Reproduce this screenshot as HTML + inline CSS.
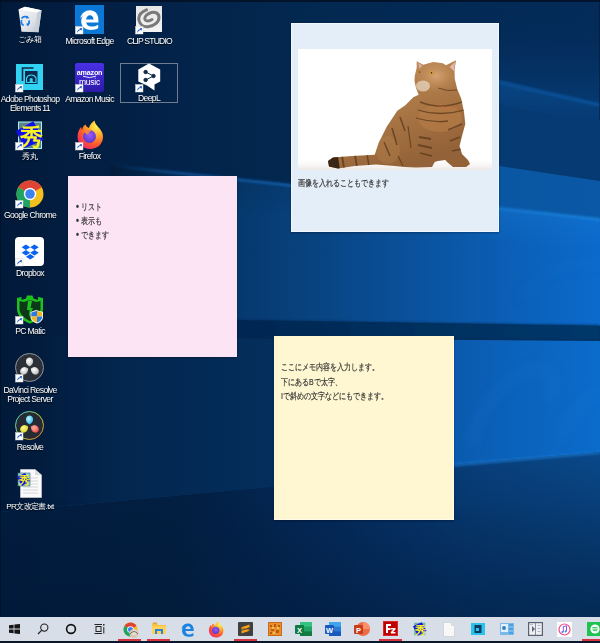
<!DOCTYPE html>
<html><head><meta charset="utf-8">
<style>
*{margin:0;padding:0;box-sizing:border-box}
html,body{width:600px;height:643px;overflow:hidden;background:#021634}
body{position:relative;font-family:"Liberation Sans",sans-serif}
#bg{position:absolute;left:0;top:0;width:600px;height:643px}
.ic{position:absolute}
.lb{position:absolute;color:#fff;font-size:8.6px;line-height:9px;letter-spacing:-0.65px;text-align:center;text-shadow:0 1px 1px rgba(0,0,0,.8);white-space:nowrap}
.note{position:absolute;box-shadow:0 1px 2px rgba(0,0,20,0.35)}
.nt{position:absolute;color:#383838;-webkit-text-stroke:0.2px #383838;font-size:9px;line-height:14px;white-space:nowrap;transform:scaleX(0.78);transform-origin:0 0}
#tb{position:absolute;left:0;top:617px;width:600px;height:24px;background:#d7dee7}
#tbb{position:absolute;left:0;top:641px;width:600px;height:2px;background:#0b1628}
.ul{position:absolute;top:639px;height:2px;background:#d8323c}
.ti{position:absolute}
</style></head><body>
<svg id="bg" width="600" height="643" viewBox="0 0 600 643">
<defs>
<linearGradient id="g0" x1="0" y1="0" x2="600" y2="0" gradientUnits="userSpaceOnUse">
<stop offset="0" stop-color="#021a3a"/>
<stop offset="0.3" stop-color="#03234a"/>
<stop offset="0.5" stop-color="#032850"/>
<stop offset="1" stop-color="#042c5a"/>
</linearGradient>
<linearGradient id="gUp" x1="400" y1="0" x2="600" y2="0" gradientUnits="userSpaceOnUse">
<stop offset="0" stop-color="#063a72" stop-opacity="0"/>
<stop offset="0.5" stop-color="#063a72" stop-opacity="1"/>
<stop offset="1" stop-color="#063a72" stop-opacity="1"/>
</linearGradient>
<linearGradient id="gUp2" x1="400" y1="0" x2="600" y2="0" gradientUnits="userSpaceOnUse">
<stop offset="0" stop-color="#0a56a2" stop-opacity="0"/>
<stop offset="0.5" stop-color="#0a56a2" stop-opacity="1"/>
<stop offset="1" stop-color="#0a58a6" stop-opacity="1"/>
</linearGradient>
<linearGradient id="gMid" x1="110" y1="0" x2="600" y2="0" gradientUnits="userSpaceOnUse">
<stop offset="0" stop-color="#03284f" stop-opacity="0"/>
<stop offset="0.12" stop-color="#04305e" stop-opacity="1"/>
<stop offset="0.25" stop-color="#05386c"/>
<stop offset="0.4" stop-color="#08427e"/>
<stop offset="0.6" stop-color="#0a509a"/>
<stop offset="0.8" stop-color="#0b5eb4"/>
<stop offset="1" stop-color="#0b6acc"/>
</linearGradient>
<linearGradient id="gMidV" x1="0" y1="170" x2="0" y2="325" gradientUnits="userSpaceOnUse">
<stop offset="0" stop-color="#000" stop-opacity="0.12"/>
<stop offset="0.3" stop-color="#000" stop-opacity="0"/>
<stop offset="1" stop-color="#000" stop-opacity="0"/>
</linearGradient>
<linearGradient id="gEdge" x1="110" y1="0" x2="600" y2="0" gradientUnits="userSpaceOnUse">
<stop offset="0" stop-color="#0d4a88" stop-opacity="0"/>
<stop offset="0.15" stop-color="#0d4a88" stop-opacity="1"/>
<stop offset="0.6" stop-color="#1468c0"/>
<stop offset="1" stop-color="#1a80d8"/>
</linearGradient>
<linearGradient id="gBand" x1="150" y1="0" x2="600" y2="0" gradientUnits="userSpaceOnUse">
<stop offset="0" stop-color="#03224a"/>
<stop offset="0.5" stop-color="#042e5c"/>
<stop offset="1" stop-color="#04386c"/>
</linearGradient>
<linearGradient id="gLow" x1="0" y1="0" x2="600" y2="0" gradientUnits="userSpaceOnUse">
<stop offset="0.07" stop-color="#03234a" stop-opacity="0"/>
<stop offset="0.2" stop-color="#03264e" stop-opacity="1"/>
<stop offset="0.45" stop-color="#042e5c"/>
<stop offset="0.7" stop-color="#0a56a6"/>
<stop offset="0.85" stop-color="#0b62ba"/>
<stop offset="1" stop-color="#0b6ccc"/>
</linearGradient>
<linearGradient id="gBot" x1="0" y1="446" x2="0" y2="617" gradientUnits="userSpaceOnUse">
<stop offset="0" stop-color="#0a4a8c"/>
<stop offset="0.45" stop-color="#073c74"/>
<stop offset="1" stop-color="#053060"/>
</linearGradient>
<linearGradient id="gBotH" x1="0" y1="0" x2="600" y2="0" gradientUnits="userSpaceOnUse">
<stop offset="0" stop-color="#021c3e" stop-opacity="1"/>
<stop offset="0.3" stop-color="#021e40" stop-opacity="1"/>
<stop offset="0.55" stop-color="#02204a" stop-opacity="0.7"/>
<stop offset="0.8" stop-color="#032452" stop-opacity="0.25"/>
<stop offset="1" stop-color="#032452" stop-opacity="0"/>
</linearGradient>
<linearGradient id="gBotV" x1="0" y1="500" x2="0" y2="617" gradientUnits="userSpaceOnUse">
<stop offset="0" stop-color="#01122a" stop-opacity="0"/>
<stop offset="1" stop-color="#01122a" stop-opacity="0.2"/>
</linearGradient>
<linearGradient id="gTR" x1="0" y1="0" x2="0" y2="105" gradientUnits="userSpaceOnUse">
<stop offset="0" stop-color="#042a56" stop-opacity="0"/>
<stop offset="0.4" stop-color="#052e5e" stop-opacity="0.6"/>
<stop offset="1" stop-color="#063a72" stop-opacity="1"/>
</linearGradient>
<linearGradient id="mTRg" x1="380" y1="0" x2="600" y2="0" gradientUnits="userSpaceOnUse">
<stop offset="0" stop-color="#fff" stop-opacity="0"/>
<stop offset="0.6" stop-color="#fff" stop-opacity="1"/>
<stop offset="1" stop-color="#fff" stop-opacity="1"/>
</linearGradient>
<mask id="mTR"><rect x="0" y="0" width="600" height="643" fill="url(#mTRg)"/></mask>
<filter id="b6" x="-50%" y="-50%" width="200%" height="200%"><feGaussianBlur stdDeviation="6"/></filter>
<linearGradient id="gGlow" x1="0" y1="0" x2="0" y2="1">
<stop offset="0" stop-color="#1a7ad4" stop-opacity="0.55"/>
<stop offset="1" stop-color="#1a7ad4" stop-opacity="0"/>
</linearGradient>
<linearGradient id="mGg" x1="300" y1="0" x2="600" y2="0" gradientUnits="userSpaceOnUse">
<stop offset="0" stop-color="#fff" stop-opacity="0"/>
<stop offset="0.6" stop-color="#fff" stop-opacity="1"/>
<stop offset="1" stop-color="#fff" stop-opacity="1"/>
</linearGradient>
<mask id="mG"><rect x="0" y="0" width="600" height="643" fill="url(#mGg)"/></mask>
<filter id="b1" x="-5%" y="-50%" width="110%" height="200%"><feGaussianBlur stdDeviation="1"/></filter>
<filter id="b2" x="-5%" y="-50%" width="110%" height="200%"><feGaussianBlur stdDeviation="2"/></filter>
</defs>
<rect width="600" height="643" fill="url(#g0)"/>
<polygon points="380,0 600,0 600,103 380,57" fill="url(#gTR)" mask="url(#mTR)"/>
<!-- upper beam (edge1 -> edge2) -->
<polygon points="400,57 600,103 600,181 400,151" fill="url(#gUp)"/>
<polygon points="400,57 600,103 600,107 400,61" fill="url(#gUp2)" opacity="0.6" filter="url(#b1)"/>
<!-- between edge2 and edge3 -->
<polygon points="400,151 600,181 600,219 400,197" fill="url(#gUp2)"/>
<!-- middle beam -->
<polygon points="110,165 600,219 600,326 110,318" fill="url(#gMid)"/>
<polygon points="110,165 600,219 600,326 110,318" fill="url(#gMidV)"/>
<polygon points="110,164 600,218 600,221 110,167" fill="url(#gEdge)" filter="url(#b1)"/>
<polygon points="300,186 600,220 600,250 300,216" fill="url(#gGlow)" mask="url(#mG)"/>
<polygon points="400,63 600,104 600,125 400,84" fill="url(#gGlow)" mask="url(#mTR)" opacity="0.45"/>
<!-- dark band -->
<polygon points="150,319 600,325 600,340 150,337" fill="url(#gBand)" filter="url(#b1)"/>
<!-- lower beam -->
<polygon points="40,337 600,341 600,452 460,464 280,486 40,512" fill="url(#gLow)"/>
<g filter="url(#b6)" opacity="0.25">
<path d="M470,445 C480,410 500,380 530,370 C550,362 560,380 548,400" stroke="#2a80d8" stroke-width="6" fill="none"/>
<path d="M560,440 C570,410 590,395 600,390" stroke="#2a80d8" stroke-width="6" fill="none"/>
<path d="M520,300 C540,270 570,260 600,265" stroke="#2a80d8" stroke-width="5" fill="none" opacity="0.6"/>
</g>
<!-- bottom -->
<polygon points="0,512 280,486 460,464 600,452 600,617 0,617" fill="url(#gBot)"/>
<polygon points="0,512 280,486 460,464 600,452 600,617 0,617" fill="url(#gBotH)"/>
<rect x="0" y="480" width="600" height="137" fill="url(#gBotV)"/>
<polygon points="280,485 460,463 600,451 600,454 460,466 280,488" fill="#1a78d0" opacity="0.7" filter="url(#b1)"/>
<rect x="0" y="0" width="600" height="2" fill="#030f22" opacity="0.8"/><rect x="0" y="0" width="1" height="617" fill="#020e24" opacity="0.7"/><rect x="599" y="0" width="1" height="120" fill="#020e24" opacity="0.4"/>
</svg>
<!-- recycle bin -->
<svg class="ic" style="left:17px;top:6px" width="26" height="28" viewBox="0 0 26 28">
<defs><linearGradient id="rb" x1="0" y1="0" x2="1" y2="1"><stop offset="0" stop-color="#f6f8fa"/><stop offset="0.6" stop-color="#dfe3e8"/><stop offset="1" stop-color="#b4bcc6"/></linearGradient></defs>
<path d="M1.5,3.5 L8,0.8 L24.5,4.2 L21.5,26.2 L4.5,25.8 Z" fill="url(#rb)"/>
<path d="M8,0.8 L24.5,4.2 L20,6.8 L1.5,3.5 Z" fill="#ffffff"/>
<path d="M20,6.8 L24.5,4.2 L21.5,26.2 L18.5,26 Z" fill="#c8ced6"/>
<g fill="none" stroke="#1c7ee6" stroke-width="1.8">
<path d="M4.6,12.6 A4,4 0 0 1 10.5,11.5"/><path d="M12,14.5 A4,4 0 0 1 9.8,19.2"/><path d="M6.6,19.4 A4,4 0 0 1 4.2,15.6"/>
</g>
<g fill="#1c7ee6"><path d="M10,9.6 L12.4,12.2 L9.2,12.6 Z"/><path d="M12.5,17.2 L11,20.2 L9.3,17.6 Z"/><path d="M3.2,14.5 L5.6,13.8 L4.6,17 Z"/></g>
</svg>
<div class="lb" style="left:0;top:35px;width:60px;font-size:7.6px;letter-spacing:-0.2px">ごみ箱</div>

<!-- edge -->
<svg class="ic" style="left:75px;top:5px" width="29" height="29" viewBox="0 0 29 29">
<rect width="29" height="29" fill="#0b78d6"/>
<path d="M5.2,13.2 C6.8,8 10.5,5.3 14.8,5.3 C20,5.3 23.4,9 23.4,14.8 L23.4,17.6 L11.2,17.6 C11.6,20.2 13.6,21.6 16.6,21.6 C18.9,21.6 21.2,20.9 23.2,19.7 L23.2,23.2 C21.2,24.3 18.6,24.9 15.8,24.9 C9.8,24.9 6.2,21.2 6.2,16.2 C6.2,13.8 7,11.9 8.4,10.6 C7.4,11.3 6.2,12.2 5.2,13.2 Z M11.1,14.5 L18.6,14.5 C18.4,11.9 16.9,10.3 14.9,10.3 C12.9,10.3 11.4,11.9 11.1,14.5 Z" fill="#fff"/>
</svg>
<div class="lb" style="left:59px;top:37px;width:61px">Microsoft Edge</div>

<!-- clip studio -->
<svg class="ic" style="left:136px;top:6px" width="26" height="26" viewBox="0 0 26 26">
<defs><linearGradient id="cs" x1="0" y1="0" x2="0" y2="1"><stop offset="0" stop-color="#e6e6e6"/><stop offset="1" stop-color="#f4f4f4"/></linearGradient></defs>
<rect width="26" height="26" fill="url(#cs)"/>
<path d="M10.5,3.8 C5,6 2,10 3,14.5 C4,19 8,21.5 13,20.5 C18.5,19.5 23,16 23,11.5 C23,7.5 19.5,5.5 15.5,6.5 C11.5,7.5 8,10.5 9,13.5 C9.8,15.5 13,15.5 16,13.5" fill="none" stroke="#7a7a7a" stroke-width="3" stroke-linecap="round"/>
</svg>
<div class="lb" style="left:119px;top:37px;width:61px;letter-spacing:-0.8px">CLIP STUDIO</div>

<!-- photoshop elements -->
<svg class="ic" style="left:16px;top:64px" width="27" height="26" viewBox="0 0 27 26">
<rect width="27" height="26" fill="#31d2f2"/>
<path d="M6.5,17 L6.5,4 L17.5,4" fill="none" stroke="#0c2a4c" stroke-width="1.6"/>
<rect x="9" y="7" width="12.5" height="13" fill="#0c2a4c"/>
<path d="M10.5,18.5 L10.5,14 C12,10 18.5,10 20,14 L20,18.5 Z" fill="none" stroke="#31d2f2" stroke-width="1.2"/>
<circle cx="15.2" cy="15.5" r="1.6" fill="#31d2f2"/>
<path d="M13,19 L13.8,16.5 L16.6,16.5 L17.4,19 Z" fill="#31d2f2"/>
</svg>
<div class="lb" style="left:-3px;top:95px;width:66px;line-height:9px">Adobe Photoshop<br>Elements 11</div>

<!-- amazon music -->
<svg class="ic" style="left:75px;top:63px" width="29" height="29" viewBox="0 0 29 29">
<defs><linearGradient id="am" x1="0" y1="0" x2="0" y2="1"><stop offset="0" stop-color="#4a30e8"/><stop offset="1" stop-color="#2c1aa8"/></linearGradient></defs>
<rect width="29" height="29" rx="2" fill="url(#am)"/>
<text x="14.5" y="12" font-family="Liberation Sans" font-size="7.2" font-weight="bold" fill="#fff" text-anchor="middle" letter-spacing="-0.2">amazon</text>
<path d="M8,13.2 Q14.5,16 21,13.2" stroke="#fff" stroke-width="0.9" fill="none"/>
<text x="14.5" y="21.5" font-family="Liberation Sans" font-size="8.5" fill="#fff" text-anchor="middle" letter-spacing="-0.2">music</text>
</svg>
<div class="lb" style="left:59px;top:95px;width:61px">Amazon Music</div>

<!-- deepl selection -->
<div style="position:absolute;left:120px;top:63px;width:58px;height:40px;border:1px solid #6f7d92"></div>
<svg class="ic" style="left:138px;top:63px" width="23" height="28" viewBox="0 0 23 28">
<path d="M11,0.5 L22.2,6.5 L22.2,18.5 L16.5,21.5 L16.5,27.5 L9,22.5 L0.3,18.5 L0.3,6.5 Z" fill="#fff"/>
<g stroke="#0f2b46" stroke-width="1" fill="#0f2b46">
<line x1="7.6" y1="9" x2="15.5" y2="13"/><line x1="15.5" y1="13" x2="7.6" y2="17"/>
<circle cx="7.6" cy="9" r="1.7"/><circle cx="15.5" cy="13" r="1.7"/><circle cx="7.6" cy="17" r="1.7"/>
</g>
</svg>
<div class="lb" style="left:120px;top:94px;width:58px">DeepL</div>

<!-- hidemaru -->
<svg class="ic" style="left:16px;top:121px" width="29" height="29" viewBox="0 0 29 29">
<rect x="2.5" y="1" width="23" height="26.5" fill="#5c8488" stroke="#a8f0fa" stroke-width="1"/>
<path d="M0,10 L17.3,0.3 L27.7,18.7 L8.3,27.3 Z" fill="#1010e8"/>
<text x="15" y="24" font-family="Liberation Sans" font-size="23" font-weight="bold" fill="#f8f020" text-anchor="middle">秀</text>
</svg>
<div class="lb" style="left:0;top:152px;width:60px;font-size:7.6px;letter-spacing:0">秀丸</div>

<!-- firefox -->
<svg class="ic" style="left:76px;top:120px" width="28" height="30" viewBox="0 0 28 30">
<defs>
<radialGradient id="ff1" cx="0.75" cy="0.2" r="0.9"><stop offset="0" stop-color="#fff44f"/><stop offset="0.35" stop-color="#ffb02e"/><stop offset="0.7" stop-color="#ff5a2a"/><stop offset="1" stop-color="#f0286a"/></radialGradient>
<radialGradient id="ff2" cx="0.5" cy="0.4" r="0.6"><stop offset="0" stop-color="#9a5cff"/><stop offset="1" stop-color="#5b36c8"/></radialGradient>
</defs>
<path d="M14,29 C6.5,29 1.5,23.5 1.5,16.5 C1.5,12.5 3,9.5 5,7 L6,10 C6.5,7 8,5 9.5,4.5 C10,6.5 11.5,7.5 13,8 C13.5,5 16,2 18.5,0.5 C19,4 21.5,6 24,9 C26,11.5 27,14 27,17 C27,24 21.5,29 14,29 Z" fill="url(#ff1)"/>
<circle cx="13.5" cy="16.5" r="6.5" fill="url(#ff2)"/>
<path d="M8,11.5 C10,9 14,9 16,10.5 C14,11 12.5,12.5 12.5,14.5 C10,14.5 9,13 8,11.5 Z" fill="#ff8a30" opacity="0.9"/>
</svg>
<div class="lb" style="left:59px;top:152px;width:61px">Firefox</div>

<!-- chrome -->
<svg class="ic" style="left:16px;top:180px" width="28" height="28" viewBox="0 0 28 28">
<circle cx="14" cy="14" r="13.5" fill="#f4c020"/>
<path d="M14,14 L2.3,7.25 A13.5,13.5 0 0 1 25.7,7.25 Z" fill="#de4436"/>
<path d="M14,14 L2.3,7.25 A13.5,13.5 0 0 0 14,27.5 Z" fill="#1fa463"/>
<path d="M14,7.5 L25.7,7.25 L24,8 L14,8.5 Z" fill="#de4436"/>
<circle cx="14" cy="14" r="6.2" fill="#fff"/>
<circle cx="14" cy="14" r="4.8" fill="#3b82f0"/>
</svg>
<div class="lb" style="left:-1px;top:211px;width:62px">Google Chrome</div>

<!-- dropbox -->
<svg class="ic" style="left:15px;top:237px" width="29" height="29" viewBox="0 0 29 29">
<rect width="29" height="29" rx="4" fill="#fff"/>
<g fill="#0a62f4" transform="translate(15.2,14.2) scale(0.78) translate(-14.5,-14.5)">
<path d="M9,6 L14.5,9.5 L9,13 L3.5,9.5 Z"/><path d="M20,6 L25.5,9.5 L20,13 L14.5,9.5 Z"/>
<path d="M9,13 L14.5,16.5 L9,20 L3.5,16.5 Z"/><path d="M20,13 L25.5,16.5 L20,20 L14.5,16.5 Z"/>
<path d="M14.5,18 L20,21.5 L14.5,25 L9,21.5 Z"/>
</g>
</svg>
<div class="lb" style="left:0;top:269px;width:60px">Dropbox</div>

<!-- pc matic -->
<svg class="ic" style="left:16px;top:295px" width="28" height="29" viewBox="0 0 28 29">
<path d="M1,3 L5.5,2 L5.5,5 L10,3.5 L11,0.5 L16.5,0.5 L17.5,3.5 L22,5 L22,2 L27,3 L27,14 C27,21 21,26 14,28.5 C7,26 1,21 1,14 Z" fill="#1ec21e"/>
<path d="M3.5,6 L8,7 L12,5.5 L16,5.5 L20,7 L24.5,6 L24.5,14 C24.5,19.5 19.5,23.5 14,26 C8.5,23.5 3.5,19.5 3.5,14 Z" fill="#0c3a18"/>
<path d="M12,6 L16,6 L14.5,13 L17,13 L13,22 L13.5,15 L11,15 Z" fill="#1ec21e"/>
<path d="M20,15 L27,17 L27,22 C27,25 24.5,27.5 21,28.5 C17.5,27.5 14.5,25 14.5,22 L14.5,17 Z" fill="#fff"/>
<path d="M21,15.8 L26.2,17.4 L26.2,21.5 L21,21.5 Z" fill="#f3b520"/>
<path d="M15.3,17.4 L21,15.8 L21,21.5 L15.3,21.5 Z" fill="#2a7ae2"/>
<path d="M15.3,21.5 L21,21.5 L21,27.6 C18,26.6 15.3,24.5 15.3,22 Z" fill="#f3b520"/>
<path d="M21,21.5 L26.2,21.5 L26.2,22 C26.2,24.5 24,26.6 21,27.6 Z" fill="#2a7ae2"/>
</svg>
<div class="lb" style="left:0;top:327px;width:60px">PC Matic</div>

<!-- davinci project server -->
<svg class="ic" style="left:15px;top:353px" width="29" height="29" viewBox="0 0 29 29">
<defs><radialGradient id="pt" cx="0.4" cy="0.35" r="0.7"><stop offset="0" stop-color="#ffffff"/><stop offset="1" stop-color="#b8b8b8"/></radialGradient></defs>
<circle cx="14.5" cy="14.5" r="14" fill="#2b3038" stroke="#8f959c" stroke-width="1"/>
<path d="M14.5,13.5 C12,12 10.5,10 11,7.5 C11.5,5.3 13,4.5 14.5,4.5 C16,4.5 17.5,5.3 18,7.5 C18.5,10 17,12 14.5,13.5 Z" fill="url(#pt)"/>
<path d="M13.2,15.5 C13.2,18.5 12,20.8 9.5,21.5 C7.4,22 6,21 5.4,19.6 C4.8,18 5.2,16.4 7,15 C9,13.5 11,14 13.2,15.5 Z" fill="url(#pt)"/>
<path d="M15.8,15.5 C15.8,18.5 17,20.8 19.5,21.5 C21.6,22 23,21 23.6,19.6 C24.2,18 23.8,16.4 22,15 C20,13.5 18,14 15.8,15.5 Z" fill="url(#pt)"/>
</svg>
<div class="lb" style="left:-1px;top:386px;width:62px;line-height:9px">DaVinci Resolve<br>Project Server</div>

<!-- resolve -->
<svg class="ic" style="left:15px;top:411px" width="29" height="29" viewBox="0 0 29 29">
<defs>
<linearGradient id="rr" x1="0" y1="0" x2="1" y2="1"><stop offset="0" stop-color="#30c8f0"/><stop offset="0.5" stop-color="#b0e040"/><stop offset="1" stop-color="#f07030"/></linearGradient>
<radialGradient id="pc" cx="0.4" cy="0.35" r="0.7"><stop offset="0" stop-color="#c8f4ff"/><stop offset="1" stop-color="#20b8f0"/></radialGradient>
<radialGradient id="py" cx="0.4" cy="0.35" r="0.7"><stop offset="0" stop-color="#fffa90"/><stop offset="1" stop-color="#d8d020"/></radialGradient>
<radialGradient id="pr" cx="0.4" cy="0.35" r="0.7"><stop offset="0" stop-color="#ffb0a0"/><stop offset="1" stop-color="#f04848"/></radialGradient>
</defs>
<circle cx="14.5" cy="14.5" r="14" fill="#262b33" stroke="url(#rr)" stroke-width="1"/>
<path d="M14.5,13.5 C12,12 10.5,10 11,7.5 C11.5,5.3 13,4.5 14.5,4.5 C16,4.5 17.5,5.3 18,7.5 C18.5,10 17,12 14.5,13.5 Z" fill="url(#pc)"/>
<path d="M13.2,15.5 C13.2,18.5 12,20.8 9.5,21.5 C7.4,22 6,21 5.4,19.6 C4.8,18 5.2,16.4 7,15 C9,13.5 11,14 13.2,15.5 Z" fill="url(#py)"/>
<path d="M15.8,15.5 C15.8,18.5 17,20.8 19.5,21.5 C21.6,22 23,21 23.6,19.6 C24.2,18 23.8,16.4 22,15 C20,13.5 18,14 15.8,15.5 Z" fill="url(#pr)"/>
</svg>
<div class="lb" style="left:0;top:443px;width:60px">Resolve</div>

<!-- txt doc -->
<svg class="ic" style="left:17px;top:469px" width="26" height="29" viewBox="0 0 26 29">
<path d="M3.5,0.5 L18,0.5 L24.5,6 L24.5,28.5 L3.5,28.5 Z" fill="#fafafa" stroke="#d8d8d8" stroke-width="0.6"/>
<path d="M18,0.5 L18,6 L24.5,6 Z" fill="#d9dde2"/>
<g stroke="#c8ccd0" stroke-width="0.8"><line x1="12" y1="9" x2="21" y2="9"/><line x1="12" y1="12" x2="21" y2="12"/><line x1="12" y1="15" x2="21" y2="15"/><line x1="6" y1="18" x2="21" y2="18"/><line x1="6" y1="21" x2="21" y2="21"/><line x1="6" y1="24" x2="21" y2="24"/></g>
<rect x="1" y="4" width="12" height="13" fill="#8fcfd8" stroke="#4a6a70" stroke-width="0.6"/>
<path d="M0,8 L8,4 L13,12 L5,17 Z" fill="#1414e6"/>
<text x="7" y="15" font-family="Liberation Sans" font-size="11" font-weight="bold" fill="#f5f020" text-anchor="middle">秀</text>
</svg>
<div class="lb" style="left:-1px;top:502px;width:62px;font-size:8px">PR文改定書.txt</div>

<!-- shortcut overlays -->
<svg width="0" height="0" style="position:absolute"><defs>
<g id="sc"><rect x="0.5" y="0.5" width="7.5" height="7.5" fill="#fff" stroke="#d0d0d0" stroke-width="0.5"/><path d="M2.2,6.8 C2.2,4.5 3.2,3.4 5.2,3.3 L4.6,2.2 L7,2.1 L6.6,4.7 L5.8,3.9 C4.3,4.1 3.4,5 2.2,6.8 Z" fill="#2460c8"/></g>
</defs></svg>
<svg class="ic" style="left:75px;top:26px" width="9" height="9"><use href="#sc"/></svg>
<svg class="ic" style="left:135px;top:26px" width="9" height="9"><use href="#sc"/></svg>
<svg class="ic" style="left:15px;top:84px" width="9" height="9"><use href="#sc"/></svg>
<svg class="ic" style="left:75px;top:84px" width="9" height="9"><use href="#sc"/></svg>
<svg class="ic" style="left:135px;top:84px" width="9" height="9"><use href="#sc"/></svg>
<svg class="ic" style="left:15px;top:142px" width="9" height="9"><use href="#sc"/></svg>
<svg class="ic" style="left:75px;top:142px" width="9" height="9"><use href="#sc"/></svg>
<svg class="ic" style="left:15px;top:200px" width="9" height="9"><use href="#sc"/></svg>
<svg class="ic" style="left:15px;top:258px" width="9" height="9"><use href="#sc"/></svg>
<svg class="ic" style="left:15px;top:316px" width="9" height="9"><use href="#sc"/></svg>
<svg class="ic" style="left:15px;top:374px" width="9" height="9"><use href="#sc"/></svg>
<svg class="ic" style="left:15px;top:432px" width="9" height="9"><use href="#sc"/></svg>
<!-- blue note -->
<div class="note" style="left:291px;top:23px;width:208px;height:209px;background:#e3eef9;border:1px solid #f2f7fc"></div>
<svg class="ic" style="left:298px;top:49px" width="194" height="121" viewBox="298 49 194 121">
<defs>
<linearGradient id="catg" x1="0" y1="0" x2="0.5" y2="1"><stop offset="0" stop-color="#c89664"/><stop offset="0.5" stop-color="#ae7a48"/><stop offset="1" stop-color="#946238"/></linearGradient>
<linearGradient id="shd" x1="0" y1="0" x2="0" y2="1"><stop offset="0" stop-color="#fff" stop-opacity="0"/><stop offset="1" stop-color="#ebe6e4"/></linearGradient>
<clipPath id="catc"><path id="catp" d="M416.7,61.3 L423.3,64.7 L433.3,62 L442.7,63.3 L446,65.3 L456,60.3 L454.5,70 L454.7,78.7 L457.3,89.3 L461.3,98.7 L464,112 L465.3,124 L462,136 L459.5,146 L462,154 L468,160 L470,164 L466,167 L453,167 L447,162 L445.3,160 L438,161 L434.7,162 L432,167 L416,167.5 L405,167 L394.7,166 L376,164.5 L354.7,166 L338,168.5 L329,166.5 L328,161 L333,157.5 L352,156 L374.7,154.7 L378.7,142.7 L386.7,126.7 L397.3,110.7 L405.3,105.3 L413.3,97.3 L418.7,94.7 L416,88 L414.5,81 L414.7,76 L416.7,68 Z"/></clipPath>
</defs>
<rect x="298" y="49" width="194" height="121" fill="#fff"/>
<rect x="298" y="158" width="194" height="12" fill="url(#shd)"/>
<use href="#catp" fill="url(#catg)"/>
<g clip-path="url(#catc)">
<radialGradient id="face" cx="0.5" cy="0.5" r="0.5"><stop offset="0" stop-color="#d4a472"/><stop offset="1" stop-color="#c08a56" stop-opacity="0"/></radialGradient>
<ellipse cx="436" cy="76" rx="22" ry="17" fill="url(#face)"/>
<ellipse cx="423" cy="86" rx="7" ry="5.5" fill="#eadcc8" opacity="0.7"/>
<ellipse cx="440" cy="118" rx="22" ry="14" fill="#b47a46" opacity="0.7"/>
<ellipse cx="388" cy="150" rx="12" ry="14" fill="#c08a52" opacity="0.25"/>
<g stroke="#5a3a1c" fill="none" opacity="0.75">
<path d="M438,88 Q448,92 457,90" stroke-width="1"/>
<path d="M420,102 Q440,110 462,102" stroke-width="1.5"/>
<path d="M418,110 Q440,117 464,110" stroke-width="1.3"/>
<path d="M416,118 Q432,123 448,121" stroke-width="1.3"/>
<path d="M400,117 L405,131" stroke-width="1.6"/>
<path d="M392,128 L397,145" stroke-width="1.6"/>
<path d="M384,142 L390,156" stroke-width="1.5"/>
<path d="M408,126 L411,148" stroke-width="1.2"/>
<path d="M419,137 L431,139" stroke-width="1.8"/>
<path d="M418,145 L432,148" stroke-width="1.8"/>
<path d="M420,153 L432,156" stroke-width="1.4"/>
<path d="M448,130 L462,124" stroke-width="1.4"/>
<path d="M450,141 L460,137" stroke-width="1.6"/>
<path d="M452,151 L462,149" stroke-width="1.3"/>
<path d="M342,156 L344,168" stroke-width="2"/>
<path d="M355,155 L357,167" stroke-width="1.8"/>
<path d="M367,154 L369,166" stroke-width="1.5"/>
<path d="M398,156 L403,166" stroke-width="1.3"/>
</g>
<path d="M326,156 L338,156 L340,170 L326,170 Z" fill="#3a2616"/>
<path d="M436,104 Q448,110 458,106" stroke="#d0603a" stroke-width="1" fill="none" opacity="0.5"/>
</g>
<circle cx="431.3" cy="72.7" r="1.7" fill="#d89a20"/><circle cx="431.5" cy="72.7" r="0.7" fill="#2a1a0a"/>
<circle cx="419.5" cy="72" r="1.2" fill="#b88020"/><circle cx="419.6" cy="72" r="0.5" fill="#2a1a0a"/>
<path d="M418,63 L422.5,65.5 L419.5,69 Z" fill="#d8b0a0"/><path d="M455,62 L449.5,67 L454,71 Z" fill="#e0b8b0"/>
</svg>
<div class="nt" style="left:298px;top:176px">画像を入れることもできます</div>

<!-- pink note -->
<div class="note" style="left:68px;top:176px;width:169px;height:181px;background:#fde4f5"></div>
<div class="nt" style="left:76px;top:200px"><b style="font-size:11px;line-height:9px">•</b> リスト<br><b style="font-size:11px;line-height:9px">•</b> 表示も<br><b style="font-size:11px;line-height:9px">•</b> できます</div>

<!-- yellow note -->
<div class="note" style="left:274px;top:336px;width:180px;height:184px;background:#fff7d2;border-right:1px solid #fffbe8;border-bottom:1px solid #fffbe8"></div>
<div class="nt" style="left:281px;top:360px;line-height:14.5px">ここにメモ内容を入力します。<br>下にあるBで太字、<br>Iで斜めの文字などにもできます。</div>
<div id="tb"></div>
<div id="tbb"></div>
<div class="ul" style="left:118px;width:23px"></div>
<div class="ul" style="left:147px;width:23px"></div>
<div class="ul" style="left:234px;width:23px"></div>
<div class="ul" style="left:379px;width:23px"></div>
<div class="ul" style="left:582px;width:18px"></div>
<!-- start -->
<svg class="ti" style="left:9px;top:624px" width="11" height="10" viewBox="0 0 11 10"><g fill="#151515"><path d="M0,1.3 L4.6,0.7 L4.6,4.6 L0,4.6 Z"/><path d="M5.4,0.6 L11,0 L11,4.6 L5.4,4.6 Z"/><path d="M0,5.4 L4.6,5.4 L4.6,9.3 L0,8.7 Z"/><path d="M5.4,5.4 L11,5.4 L11,10 L5.4,9.4 Z"/></g></svg>
<!-- search -->
<svg class="ti" style="left:37px;top:623px" width="12" height="12" viewBox="0 0 12 12"><circle cx="7.3" cy="4.6" r="3.6" fill="none" stroke="#222" stroke-width="1.1"/><line x1="4.8" y1="7.2" x2="1" y2="11" stroke="#222" stroke-width="1.2"/></svg>
<!-- cortana -->
<svg class="ti" style="left:65px;top:623px" width="12" height="12" viewBox="0 0 12 12"><circle cx="6" cy="6" r="4.4" fill="none" stroke="#111" stroke-width="1.6"/></svg>
<!-- task view -->
<svg class="ti" style="left:94px;top:623px" width="11" height="12" viewBox="0 0 11 12"><g fill="none" stroke="#222" stroke-width="1"><rect x="2" y="3.5" width="5" height="5"/><line x1="0.5" y1="1.5" x2="8" y2="1.5"/><line x1="0.5" y1="10.5" x2="8" y2="10.5"/><line x1="9.8" y1="4" x2="9.8" y2="10.5"/></g><circle cx="9.8" cy="1.8" r="0.9" fill="#222"/></svg>
<!-- chrome w/ avatar -->
<svg class="ti" style="left:123px;top:622px" width="16" height="16" viewBox="0 0 16 16">
<circle cx="7.5" cy="7.5" r="7" fill="#f4c020"/>
<path d="M7.5,7.5 L1.44,4 A7,7 0 0 1 13.56,4 Z" fill="#de4436"/>
<path d="M7.5,7.5 L1.44,4 A7,7 0 0 0 7.5,14.5 Z" fill="#1fa463"/>
<circle cx="7.5" cy="7.5" r="3.3" fill="#fff"/><circle cx="7.5" cy="7.5" r="2.5" fill="#3b82f0"/>
<circle cx="11" cy="11.5" r="4.5" fill="#d8c8b8"/><circle cx="11" cy="10.5" r="2.5" fill="#f0e0d0"/><path d="M7,12 Q11,7 15,12" fill="none" stroke="#7a6a60" stroke-width="1"/>
</svg>
<!-- explorer -->
<svg class="ti" style="left:152px;top:622px" width="14" height="13" viewBox="0 0 14 13">
<path d="M0,1.5 L5,1.5 L6,3 L14,3 L14,12 L0,12 Z" fill="#f6c244"/>
<rect x="0" y="4" width="14" height="8" fill="#ffd257"/>
<path d="M3,12 L3,7 L11,7 L11,12 L9,12 L9,9 L5,9 L5,12 Z" fill="#2a86d8"/>
<rect x="1" y="0.5" width="4" height="1.5" fill="#e8a030"/>
</svg>
<!-- edge -->
<svg class="ti" style="left:180px;top:622px" width="15" height="15" viewBox="0 0 29 29">
<path d="M3,14 C4,7 9,3 15.5,3 C22,3 26.5,8 26.5,15.5 L26.5,17.5 L10.5,17.5 C11,21.5 13.5,24 18,24 C21,24 23.8,23 26,21.5 L26,26.5 C23.8,27.8 20.5,28.5 16.5,28.5 C8.5,28.5 4,23.5 4,17 C4,13 5.5,10 8,8 C6,10 4.5,12 3,14 Z M10.6,13.5 L20.5,13.5 C20.4,10.2 18.5,8.3 15.8,8.3 C13,8.3 11,10.3 10.6,13.5 Z" fill="#1a82e0"/>
</svg>
<!-- firefox -->
<svg class="ti" style="left:208px;top:621px" width="16" height="17" viewBox="0 0 28 30">
<path d="M14,29 C6.5,29 1.5,23.5 1.5,16.5 C1.5,12.5 3,9.5 5,7 L6,10 C6.5,7 8,5 9.5,4.5 C10,6.5 11.5,7.5 13,8 C13.5,5 16,2 18.5,0.5 C19,4 21.5,6 24,9 C26,11.5 27,14 27,17 C27,24 21.5,29 14,29 Z" fill="url(#ff1)"/>
<circle cx="13.5" cy="16.5" r="6.5" fill="url(#ff2)"/>
</svg>
<!-- sublime -->
<svg class="ti" style="left:238px;top:622px" width="15" height="14" viewBox="0 0 15 14">
<rect width="15" height="14" rx="1" fill="#404040"/>
<path d="M3.5,5.2 L11.5,2.6 L11.5,5.2 L3.5,7.8 Z" fill="#f7a21b"/>
<path d="M3.5,6.2 L11.5,8.6 L11.5,8.8 L3.5,11.4 L3.5,8.8 L8,7.4 L3.5,6.2 Z" fill="#f7a21b"/>
<path d="M3.5,5.2 L11.5,7.6 L11.5,8.6 L3.5,6.2 Z" fill="#c87810"/>
</svg>
<!-- orange -->
<svg class="ti" style="left:268px;top:622px" width="14" height="14" viewBox="0 0 14 14">
<rect width="14" height="14" fill="#c86818"/>
<rect x="1" y="1" width="12" height="12" fill="#e8902c"/>
<g fill="#b85a10"><rect x="2" y="3" width="2" height="2"/><rect x="6" y="2" width="2" height="3"/><rect x="10" y="3" width="2" height="2"/><rect x="3" y="7" width="3" height="2"/><rect x="8" y="8" width="3" height="3"/><rect x="2" y="10" width="2" height="2"/></g>
<g fill="#f8c050"><rect x="4" y="5" width="2" height="2"/><rect x="9" y="5" width="2" height="2"/><rect x="5" y="10" width="2" height="2"/></g>
</svg>
<!-- excel -->
<svg class="ti" style="left:295px;top:622px" width="17" height="14" viewBox="0 0 17 14">
<rect x="5" y="0" width="12" height="14" rx="1" fill="#21a366"/>
<rect x="5" y="0" width="12" height="4.6" fill="#33c481"/>
<rect x="5" y="9.4" width="12" height="4.6" fill="#107c41"/>
<rect x="0" y="3" width="9" height="9" rx="1" fill="#107c41"/>
<text x="4.5" y="10.5" font-family="Liberation Sans" font-size="7.5" font-weight="bold" fill="#fff" text-anchor="middle">X</text>
</svg>
<!-- word -->
<svg class="ti" style="left:325px;top:622px" width="16" height="14" viewBox="0 0 16 14">
<rect x="4" y="0" width="12" height="14" rx="1" fill="#2b7cd3"/>
<rect x="4" y="0" width="12" height="4.6" fill="#41a5ee"/>
<rect x="4" y="9.4" width="12" height="4.6" fill="#185abd"/>
<rect x="0" y="3" width="9" height="9" rx="1" fill="#185abd"/>
<text x="4.5" y="10.5" font-family="Liberation Sans" font-size="7.5" font-weight="bold" fill="#fff" text-anchor="middle">W</text>
</svg>
<!-- ppt -->
<svg class="ti" style="left:354px;top:622px" width="16" height="14" viewBox="0 0 16 14">
<circle cx="9" cy="7" r="7" fill="#ed6c47"/>
<path d="M9,0 A7,7 0 0 1 16,7 L9,7 Z" fill="#ff8f6b"/>
<rect x="0" y="3" width="9" height="9" rx="1" fill="#c43e1c"/>
<text x="4.5" y="10.5" font-family="Liberation Sans" font-size="7.5" font-weight="bold" fill="#fff" text-anchor="middle">P</text>
</svg>
<!-- filezilla -->
<svg class="ti" style="left:383px;top:621px" width="15" height="15" viewBox="0 0 15 15">
<rect width="15" height="15" fill="#bf0000"/>
<rect x="0.5" y="0.5" width="14" height="14" fill="none" stroke="#e03030" stroke-width="0.8"/>
<path d="M3,3 L8,3 L8,5 L5,5 L5,7 L7.5,7 L7.5,9 L5,9 L5,12 L3,12 Z" fill="#fff"/>
<path d="M8,7 L12.5,7 L12.5,8.5 L10,11 L12.5,11 L12.5,12.5 L7.8,12.5 L7.8,11 L10.3,8.5 L8,8.5 Z" fill="#fff"/>
</svg>
<!-- hidemaru -->
<svg class="ti" style="left:413px;top:622px" width="14" height="14" viewBox="0 0 29 29">
<rect x="2" y="1" width="24" height="27" fill="#7fa8a8" stroke="#b0f0f8" stroke-width="1"/>
<path d="M0,9 L18,0.5 L28,18 L10,28.5 Z" fill="#1414e6"/>
<text x="14.5" y="24.5" font-family="Liberation Sans" font-size="23" font-weight="bold" fill="#f5f020" text-anchor="middle">秀</text>
</svg>
<!-- blank doc -->
<svg class="ti" style="left:443px;top:622px" width="12" height="15" viewBox="0 0 12 15">
<path d="M0.5,0.5 L8,0.5 L11.5,4 L11.5,14.5 L0.5,14.5 Z" fill="#f8f8f8" stroke="#c8c8c8" stroke-width="0.6"/>
<path d="M8,0.5 L8,4 L11.5,4 Z" fill="#dcdcdc"/>
</svg>
<!-- blue app -->
<svg class="ti" style="left:471px;top:623px" width="14" height="12" viewBox="0 0 14 12">
<rect width="14" height="12" fill="#28c4ec"/>
<rect x="3.5" y="2" width="7" height="8" fill="#0c3a60"/>
<rect x="5" y="5" width="3" height="3" fill="#28c4ec"/>
</svg>
<!-- image app -->
<svg class="ti" style="left:500px;top:623px" width="14" height="12" viewBox="0 0 14 12">
<rect width="14" height="12" fill="#7ab8e8"/>
<rect x="1" y="1" width="7" height="8" fill="#e0f0ff"/>
<circle cx="4" cy="5" r="2" fill="#3a80c0"/>
<g fill="#4aa0e0"><rect x="9" y="1" width="4" height="2"/><rect x="9" y="5" width="4" height="2"/><rect x="9" y="9" width="4" height="2"/></g>
</svg>
<!-- split -->
<svg class="ti" style="left:528px;top:622px" width="15" height="14" viewBox="0 0 15 14">
<rect x="0.6" y="0.6" width="13.8" height="12.8" fill="#f0f0f4" stroke="#5a6070" stroke-width="1.2"/>
<rect x="7" y="1" width="1" height="12" fill="#8890a0"/>
<path d="M4,4 L7,7 L4,10 Z" fill="#606878"/>
<g fill="#b0b8c8"><rect x="2" y="2" width="3" height="1"/><rect x="9.5" y="3" width="3" height="1"/><rect x="9.5" y="6" width="3" height="1"/><rect x="9.5" y="9" width="3" height="1"/></g>
</svg>
<!-- itunes -->
<svg class="ti" style="left:557px;top:622px" width="15" height="15" viewBox="0 0 15 15">
<rect width="15" height="15" fill="#fff"/>
<circle cx="7.5" cy="7.5" r="5.5" fill="none" stroke="#f04a80" stroke-width="1.2"/>
<path d="M6.3,10 L6.3,4.5 L9.5,3.8 L9.5,9" fill="none" stroke="#9050e0" stroke-width="1"/>
<circle cx="5.5" cy="10" r="1.1" fill="#5080f0"/><circle cx="8.7" cy="9.3" r="1.1" fill="#5080f0"/>
</svg>
<!-- green -->
<svg class="ti" style="left:587px;top:622px" width="13" height="14" viewBox="0 0 13 14">
<rect width="13" height="14" fill="#1ec24e"/>
<circle cx="8" cy="7" r="4.6" fill="#fff"/>
<g stroke="#1ec24e" stroke-width="0.9" fill="none"><path d="M5.2,5.8 Q8,5 10.8,6"/><path d="M5.6,7.3 Q8,6.7 10.4,7.5"/><path d="M6,8.7 Q8,8.2 10,8.9"/></g>
</svg>
</body></html>
